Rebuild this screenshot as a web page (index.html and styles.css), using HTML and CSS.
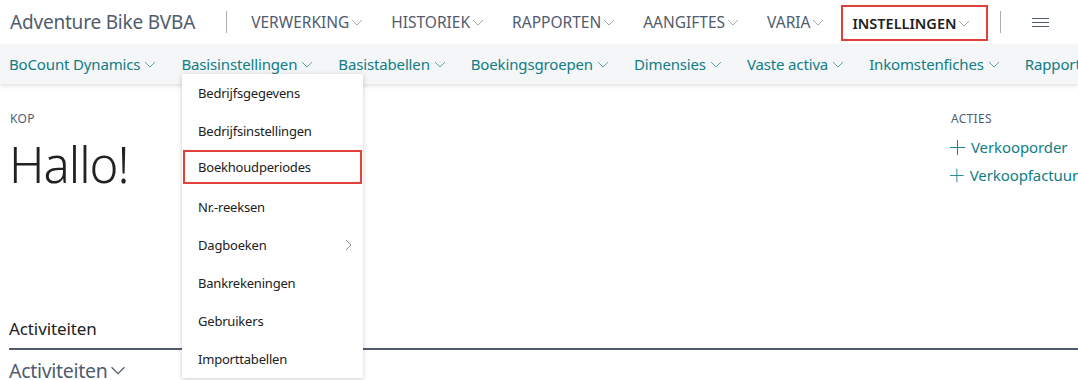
FILE: index.html
```html
<!DOCTYPE html>
<html lang="nl">
<head>
    <meta charset="UTF-8">
    <title>Adventure Bike BVBA</title>
    <link rel="stylesheet" href="styles.css">
</head>
<body>

    <!-- Top navigation -->
    <div class="topbar">
        <span class="company">Adventure Bike BVBA</span>
        <span class="divider"></span>
        <a class="top-item">VERWERKING<svg class="chev" viewBox="0 0 12 7"><path d="M1 1l5 5 5-5"/></svg></a>
        <a class="top-item">HISTORIEK<svg class="chev" viewBox="0 0 12 7"><path d="M1 1l5 5 5-5"/></svg></a>
        <a class="top-item">RAPPORTEN<svg class="chev" viewBox="0 0 12 7"><path d="M1 1l5 5 5-5"/></svg></a>
        <a class="top-item">AANGIFTES<svg class="chev" viewBox="0 0 12 7"><path d="M1 1l5 5 5-5"/></svg></a>
        <a class="top-item">VARIA<svg class="chev" viewBox="0 0 12 7"><path d="M1 1l5 5 5-5"/></svg></a>
        <a class="top-item active marked">INSTELLINGEN<svg class="chev" viewBox="0 0 12 7"><path d="M1 1l5 5 5-5"/></svg></a>
        <span class="divider second"></span>
        <span class="hamburger"><i></i><i></i><i></i></span>
    </div>

    <!-- Sub navigation -->
    <div class="subbar">
        <a class="sub-item">BoCount Dynamics<svg class="chev" viewBox="0 0 12 7"><path d="M1 1l5 5 5-5"/></svg></a>
        <a class="sub-item">Basisinstellingen<svg class="chev" viewBox="0 0 12 7"><path d="M1 1l5 5 5-5"/></svg></a>
        <a class="sub-item">Basistabellen<svg class="chev" viewBox="0 0 12 7"><path d="M1 1l5 5 5-5"/></svg></a>
        <a class="sub-item">Boekingsgroepen<svg class="chev" viewBox="0 0 12 7"><path d="M1 1l5 5 5-5"/></svg></a>
        <a class="sub-item">Dimensies<svg class="chev" viewBox="0 0 12 7"><path d="M1 1l5 5 5-5"/></svg></a>
        <a class="sub-item">Vaste activa<svg class="chev" viewBox="0 0 12 7"><path d="M1 1l5 5 5-5"/></svg></a>
        <a class="sub-item">Inkomstenfiches<svg class="chev" viewBox="0 0 12 7"><path d="M1 1l5 5 5-5"/></svg></a>
        <a class="sub-item">Rapporten<svg class="chev" viewBox="0 0 12 7"><path d="M1 1l5 5 5-5"/></svg></a>
    </div>

    <!-- Dropdown for Basisinstellingen -->
    <div class="dropdown">
        <a class="drop-item">Bedrijfsgegevens</a>
        <a class="drop-item">Bedrijfsinstellingen</a>
        <a class="drop-item marked">Boekhoudperiodes</a>
        <a class="drop-item">Nr.-reeksen</a>
        <a class="drop-item">Dagboeken<svg class="arrow" viewBox="0 0 7 12"><path d="M1 1l5 5-5 5"/></svg></a>
        <a class="drop-item">Bankrekeningen</a>
        <a class="drop-item">Gebruikers</a>
        <a class="drop-item">Importtabellen</a>
    </div>

    <!-- Page content -->
    <div class="content">
        <div class="head-row">
            <div class="head">
                <div class="caption">KOP</div>
                <h1 class="hello">Hallo!</h1>
            </div>
            <div class="actions">
                <div class="caption">ACTIES</div>
                <a class="action"><svg class="plus" viewBox="0 0 16 16"><path d="M8 0v16M0 8h16"/></svg>Verkooporder</a>
                <a class="action"><svg class="plus" viewBox="0 0 16 16"><path d="M8 0v16M0 8h16"/></svg>Verkoopfactuur</a>
            </div>
        </div>

        <div class="section-title">Activiteiten</div>
        <div class="section-sub">Activiteiten<svg class="chev" viewBox="0 0 12 7"><path d="M1 1l5 5 5-5"/></svg></div>
    </div>

</body>
</html>
```

FILE: styles.css
```css
body {
    font-family: "Noto Sans", "Open Sans", sans-serif;
    margin: 0;
    background-color: #fff;
    color: #212121;
    overflow: hidden;
    width: 1078px;
    height: 380px;
    position: relative;
}
a {
    text-decoration: none;
    cursor: pointer;
}

/* Top bar */
.topbar {
    height: 44px;
    display: flex;
    align-items: center;
    padding-left: 10px;
    white-space: nowrap;
}
.company {
    font-size: 19px;
    color: #505c6d;
    letter-spacing: -0.2px;
    margin-right: 31px;
}
.divider {
    width: 1px;
    height: 22px;
    background-color: #a8adb3;
    margin-right: 24px;
}
.divider.second {
    margin-right: 31px;
}
.top-item {
    display: flex;
    align-items: center;
    font-size: 15.5px;
    color: #505c6d;
    margin-right: 28px;
}
.top-item .chev {
    flex-shrink: 0;
    width: 12px;
    height: 7px;
    margin-left: 2px;
    stroke: #a8adb3;
}
.top-item.active {
    font-weight: 600;
    font-size: 14.5px;
    color: #212121;
}
.top-item.marked {
    box-sizing: border-box;
    border: 2px solid #e3403a;
    height: 36px;
    padding: 0 16px 0 9px;
    align-self: flex-start;
    margin-top: 5px;
    margin-left: -11px;
    margin-right: 12px;
}
.hamburger {
    display: flex;
    flex-direction: column;
    gap: 3px;
}
.hamburger i {
    display: block;
    width: 17px;
    height: 1px;
    background-color: #505c6d;
}
.chev {
    fill: none;
    stroke-width: 1;
}

/* Sub bar */
.subbar {
    height: 40px;
    background-color: #f4f6f7;
    display: flex;
    align-items: center;
    padding-left: 9px;
    white-space: nowrap;
    box-shadow: 0 2px 4px rgba(0, 0, 0, 0.12);
    position: relative;
    z-index: 1;
}
.sub-item {
    display: flex;
    align-items: center;
    font-size: 15px;
    letter-spacing: -0.15px;
    color: #0f7d85;
    margin-right: 25px;
}
.sub-item .chev {
    flex-shrink: 0;
    width: 12px;
    height: 7px;
    margin-left: 4px;
    stroke: #5aa5ab;
}

/* Dropdown */
.dropdown {
    position: absolute;
    left: 182px;
    top: 74px;
    width: 181px;
    background-color: #fff;
    box-shadow: 0 1px 5px rgba(0, 0, 0, 0.2);
    z-index: 2;
}
.drop-item {
    display: flex;
    align-items: center;
    justify-content: space-between;
    height: 38px;
    padding: 0 11px 0 16px;
    font-size: 13px;
    color: #212121;
    letter-spacing: -0.2px;
}
.drop-item.marked {
    height: 32px;
    margin: 1px 2px 5px 2px;
    padding-left: 14px;
    outline: 2px solid #e3403a;
    outline-offset: -1px;
}
.arrow {
    width: 7px;
    height: 12px;
    fill: none;
    stroke: #8a8f96;
    stroke-width: 1;
}

/* Content */
.content {
    padding: 0 0 0 9px;
}
.head-row {
    display: flex;
    justify-content: space-between;
    height: 233px;
}
.head {
    padding-top: 26px;
}
.caption {
    font-size: 12px;
    color: #4d5f73;
    letter-spacing: 0.3px;
    padding-left: 1px;
}
.hello {
    font-weight: 300;
    font-size: 49px;
    margin: 7px 0 0 0;
    letter-spacing: -1px;
    color: #212121;
    line-height: 60px;
}
.actions {
    width: 128px;
    padding-top: 26px;
}
.actions .caption {
    margin-bottom: 6px;
}
.action {
    display: flex;
    align-items: center;
    font-size: 15px;
    color: #0f7d85;
    height: 28px;
    letter-spacing: -0.1px;
    white-space: nowrap;
}
.plus {
    width: 15px;
    height: 15px;
    stroke: #0f7d85;
    stroke-width: 1;
    margin-right: 6px;
}
.section-title {
    font-size: 17px;
    color: #212121;
    padding-bottom: 8px;
    border-bottom: 2px solid #505c6d;
    letter-spacing: -0.1px;
}
.section-sub {
    display: flex;
    align-items: center;
    font-size: 19.5px;
    color: #505c6d;
    margin-top: 7px;
    letter-spacing: -0.3px;
}
.section-sub .chev {
    width: 16px;
    height: 9px;
    margin-left: 3px;
    stroke: #505c6d;
}
```
